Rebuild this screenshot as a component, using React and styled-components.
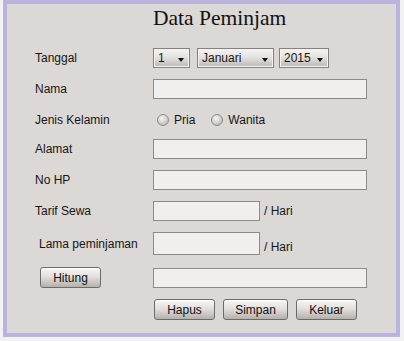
import React from "react";
import styled, { createGlobalStyle } from "styled-components";

const GlobalStyle = createGlobalStyle`
  html, body { margin: 0; padding: 0; background: #f2f2f3; }
  body { font-family: "Liberation Sans", Arial, sans-serif; color: #161616; }
`;

const Page = styled.div`
  padding-left: 3px;
`;

const Frame = styled.div`
  box-sizing: border-box;
  width: 397px;
  height: 337px;
  border: 4px solid #b9b3de;
  background: #dbd8d5;
  padding-left: 28px;
  display: flex;
  flex-direction: column;
`;

const Title = styled.h1`
  box-sizing: border-box;
  margin: 0 0 0 118px;
  height: 44px;
  padding-top: 4px;
  font-family: "Liberation Serif", "Times New Roman", serif;
  font-weight: normal;
  font-size: 21.5px;
  line-height: 21px;
  color: #111;
`;

const Row = styled.div`
  display: flex;
  align-items: center;
  height: ${(p) => p.$h || 20}px;
  margin-top: ${(p) => p.$mt || 0}px;
`;

const Label = styled.span`
  box-sizing: border-box;
  width: 118px;
  padding-left: ${(p) => p.$indent || 0}px;
  font-size: 12px;
  flex-shrink: 0;
`;

const Combo = styled.div`
  box-sizing: border-box;
  width: ${(p) => p.$w}px;
  height: 20px;
  margin-right: ${(p) => p.$mr || 0}px;
  border: 1px solid #85817e;
  box-shadow: inset 0 0 0 1px #f4f3f2;
  background: linear-gradient(#f6f5f4, #e4e2df 45%, #bcb8b4);
  display: flex;
  align-items: center;
  justify-content: space-between;
  padding: 0 5px 0 4px;
  font-size: 12px;
`;

const Arrow = styled.span`
  width: 0;
  height: 0;
  margin-top: 3px;
  border-left: 3.5px solid transparent;
  border-right: 3.5px solid transparent;
  border-top: 4px solid #111;
`;

const Field = styled.div`
  box-sizing: border-box;
  width: ${(p) => p.$w}px;
  height: ${(p) => p.$h || 20}px;
  border: 1px solid #8d8a87;
  background: #f1efed;
  flex-shrink: 0;
`;

const Suffix = styled.span`
  margin-left: 4px;
  font-size: 12px;
  align-self: ${(p) => (p.$low ? "flex-end" : "center")};
  margin-bottom: ${(p) => (p.$low ? 1 : 0)}px;
`;

const RadioGroup = styled.div`
  display: flex;
  align-items: center;
  margin-left: 4px;
`;

const RadioOption = styled.label`
  display: flex;
  align-items: center;
  gap: 5px;
  margin-right: ${(p) => p.$mr || 0}px;
  font-size: 12px;
`;

const RadioDot = styled.span`
  box-sizing: border-box;
  width: 12px;
  height: 12px;
  border-radius: 50%;
  border: 1px solid #8c8c8c;
  background: radial-gradient(circle at 40% 35%, #f4f4f4 0%, #d6d6d6 45%, #a9a9a9 100%);
`;

const Button = styled.button`
  box-sizing: border-box;
  width: ${(p) => p.$w}px;
  height: 21px;
  margin-left: ${(p) => p.$ml || 0}px;
  padding: 0;
  border: 1px solid #6d6a67;
  border-radius: 3px;
  background: linear-gradient(#f8f7f6, #e2dfdc 45%, #b5b1ad);
  box-shadow: inset 0 1px 0 #ffffff;
  font-family: "Liberation Sans", Arial, sans-serif;
  font-size: 12px;
  color: #111;
  flex-shrink: 0;
`;

const ButtonBar = styled.div`
  display: flex;
  margin-left: 119px;
`;

export default function App() {
  return (
    <Page>
      <GlobalStyle />
      <Frame>
        <Title>Data Peminjam</Title>
        <Row>
          <Label>Tanggal</Label>
          <Combo $w={37} $mr={7}>
            <span>1</span>
            <Arrow />
          </Combo>
          <Combo $w={77} $mr={5}>
            <span>Januari</span>
            <Arrow />
          </Combo>
          <Combo $w={50}>
            <span>2015</span>
            <Arrow />
          </Combo>
        </Row>
        <Row $mt={11}>
          <Label>Nama</Label>
          <Field $w={214} />
        </Row>
        <Row $mt={11}>
          <Label>Jenis Kelamin</Label>
          <RadioGroup>
            <RadioOption $mr={16}>
              <RadioDot />
              Pria
            </RadioOption>
            <RadioOption>
              <RadioDot />
              Wanita
            </RadioOption>
          </RadioGroup>
        </Row>
        <Row $mt={9}>
          <Label>Alamat</Label>
          <Field $w={214} />
        </Row>
        <Row $mt={11}>
          <Label>No HP</Label>
          <Field $w={214} />
        </Row>
        <Row $mt={11}>
          <Label>Tarif Sewa</Label>
          <Field $w={107} />
          <Suffix>/ Hari</Suffix>
        </Row>
        <Row $mt={11} $h={23}>
          <Label $indent={4}>Lama peminjaman</Label>
          <Field $w={107} $h={23} />
          <Suffix $low>/ Hari</Suffix>
        </Row>
        <Row $mt={12} $h={21}>
          <Label $indent={5}>
            <Button $w={61}>Hitung</Button>
          </Label>
          <Field $w={214} />
        </Row>
        <Row $mt={11} $h={21}>
          <ButtonBar>
            <Button $w={61}>Hapus</Button>
            <Button $w={65} $ml={8}>Simpan</Button>
            <Button $w={61} $ml={8}>Keluar</Button>
          </ButtonBar>
        </Row>
      </Frame>
    </Page>
  );
}
